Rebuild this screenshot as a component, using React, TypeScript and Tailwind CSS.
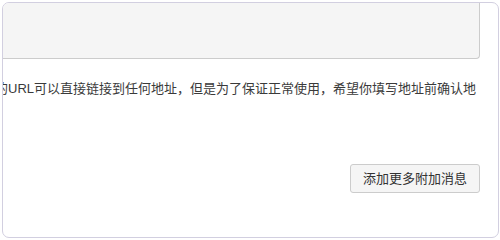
import React from "react";

export default function App() {
  return (
    <div className="w-[500px] h-[240px] bg-white overflow-hidden pt-[2px] pl-[2px]" style={{ fontFamily: '"Liberation Sans", "Noto Sans CJK SC", sans-serif' }}>
      <div className="w-[497px] h-[236px] border border-[#d2cfe0] rounded-[7px] overflow-hidden flex flex-col">
        <div className="w-[477px] h-[56px] shrink-0 bg-[#f5f5f5] border-r border-b border-[#cccccc] rounded-br-[4px]" />
        <div className="mt-[20px] h-[20px] leading-[20px] text-[13px] text-[#3a3a3a] whitespace-nowrap overflow-hidden">
          <span className="ml-[-8px]">的URL可以直接链接到任何地址，但是为了保证正常使用，希望你填写地址前确认地</span>
        </div>
        <div className="mt-[65px] flex justify-end pr-[18px]">
          <button className="h-[29px] px-[12px] bg-[#f5f5f5] border border-[#cccccc] rounded-[3px] text-[13px] text-[#333333] leading-[27px]">
            添加更多附加消息
          </button>
        </div>
      </div>
    </div>
  );
}
